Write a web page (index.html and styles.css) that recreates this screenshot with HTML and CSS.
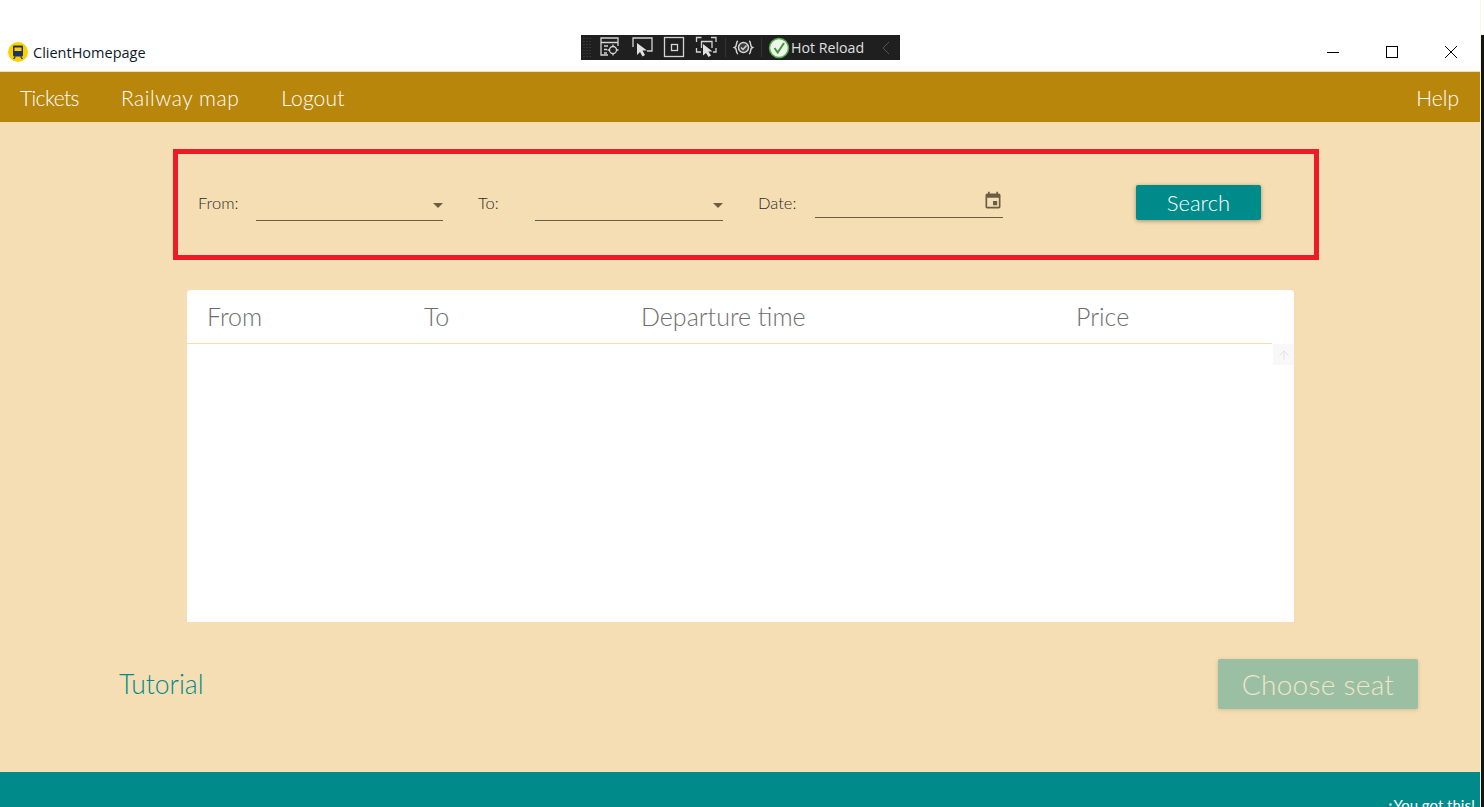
FILE: index.html
```html
<!DOCTYPE html>

<html lang="en">

<head>
    <title>ClientHomepage</title>
    <meta charset="utf-8">
    <meta name="viewport" content="width=device-width, initial-scale=1.0">
    <link rel="stylesheet" href="styles.css">
</head>

<body>
    <div class="screen">
        <div class="window">
            <div class="titlebar">
                <svg class="app_icon" viewBox="0 0 20 20" width="20" height="20">
                    <circle cx="10" cy="10" r="10" fill="#fdd000" />
                    <path d="M6 3.500h8a1 1 0 0 1 1 1V13a1.500 1.500 0 0 1-1.500 1.500h-7A1.500 1.500 0 0 1 5 13V4.500a1 1 0 0 1 1-1z" fill="#1c3560" />
                    <rect x="6.500" y="5.500" width="7" height="3.500" fill="#fdd000" />
                    <path d="M6.500 14.500 5 17h1.500l1.500-2.500zM13.500 14.500 15 17h-1.500L12 14.500z" fill="#1c3560" />
                </svg>
                <span class="app_title">ClientHomepage</span>
                <div class="window_buttons">
                    <svg viewBox="0 0 12 12" width="12" height="12"><path d="M0 6.500h12" stroke="#000" fill="none" /></svg>
                    <svg viewBox="0 0 12 12" width="12" height="12"><rect x="0.500" y="0.500" width="11" height="11" stroke="#000" fill="none" /></svg>
                    <svg viewBox="0 0 12 12" width="12" height="12"><path d="M0 0l12 12M12 0L0 12" stroke="#000" fill="none" /></svg>
                </div>
            </div>

            <nav class="menu">
                <a class="tickets">Tickets</a>
                <a class="railway">Railway map</a>
                <a class="logout">Logout</a>
                <a class="help">Help</a>
            </nav>

            <main>
                <div class="search">
                    <label class="from_label">From:</label>
                    <div class="combo"><span class="arrow"></span></div>
                    <label>To:</label>
                    <div class="combo to_combo"><span class="arrow"></span></div>
                    <label>Date:</label>
                    <div class="date">
                        <svg viewBox="0 0 24 24" width="20" height="20">
                            <path fill="#6b5d45" d="M17 12h-5v5h5v-5zM16 1v2H8V1H6v2H5c-1.110 0-1.990.9-1.990 2L3 19c0 1.100.89 2 2 2h14c1.100 0 2-.9 2-2V5c0-1.100-.9-2-2-2h-1V1h-2zm3 18H5V8h14v11z" />
                        </svg>
                    </div>
                    <button class="search_btn">Search</button>
                </div>

                <div class="card">
                    <div class="card_head">
                        <span>From</span>
                        <span>To</span>
                        <span>Departure time</span>
                        <span>Price</span>
                    </div>
                    <div class="scroll_up">
                        <svg viewBox="0 0 12 12" width="12" height="12"><path d="M6 11V2M1.500 6.500 6 2l4.500 4.500" stroke="#e2e2e2" fill="none" /></svg>
                    </div>
                </div>

                <div class="actions">
                    <a class="tutorial">Tutorial</a>
                    <button class="choose" disabled>Choose seat</button>
                </div>
            </main>

            <footer>
                <span class="cheer">You got this!</span>
            </footer>
        </div>
        <div class="edge"></div>
    </div>

    <!-- debug toolbar sits over the title bar -->
    <div class="hot_reload">
        <svg viewBox="0 0 186 25" width="186" height="25">
            <path d="M3 3v19M6 3v19M9 3v19" stroke="#4a4a4a" stroke-dasharray="1 2" fill="none" />
            <path d="M144.500 3v19M180.500 3v19" stroke="#333" fill="none" />
            <g stroke="#d4d4d4" fill="none" stroke-width="1.300">
                <path d="M27 20H20V3h17v8M20 7.500h17M23 11h4M23 14.500h3M23 18h3" />
                <circle cx="32" cy="15" r="3.500" />
                <path d="M32 9.500v2M32 18.500v2M26.500 15h2M35.500 15h2" />
                <path d="M52 12V3h19v13h-5" />
                <rect x="83.500" y="2.500" width="19" height="19" />
                <rect x="90.500" y="9.500" width="6" height="6" />
                <path d="M115.500 7V2.500h5M130 2.500h5V7M135 13v4h-3M120 17h-4.500v-4" />
                <path d="M120.500 13V6.500h10.500V13" />
            </g>
            <path d="M56 8v12l3-3 2.500 4.500 2.500-1.500-2.500-4.500h4.500z" fill="#e0e0e0" />
            <path d="M122 9v11.500l3-2.500 2.500 4 2.500-1.500-2.500-4h4z" fill="#e0e0e0" />
            <g stroke="#d4d4d4" fill="none" stroke-width="1.500">
                <path d="M157 6c-3 1 0 5-3.500 6.500C157 14 154 18 157 19M168 6c3 1 0 5 3.500 6.500C168 14 171 18 168 19" />
                <circle cx="162.500" cy="12.500" r="5" fill="#3c3c3c" />
                <path d="M160 12.500l2 2 3.500-4" />
            </g>
        </svg>
        <svg class="hr_check" viewBox="0 0 22 22" width="22" height="22">
            <circle cx="11" cy="11" r="9.500" fill="#eef6ee" stroke="#52b043" stroke-width="1.500" />
            <path d="M6.500 11l3.200 4.500L16 6" stroke="#3d9a33" stroke-width="2" fill="none" />
        </svg>
        <span class="hr_text">Hot Reload</span>
        <svg class="hr_back" viewBox="0 0 8 14" width="8" height="14"><path d="M7 1L1 7l6 6" stroke="#555" fill="none" /></svg>
    </div>
</body>

</html>
```

FILE: styles.css
```css
html,
body {
    margin: 0;
    padding: 0;
    background-color: white;
}

body {
    font-family: "Lato", "Open Sans", sans-serif;
    overflow: hidden;
}

.screen {
    display: flex;
    height: 807px;
    overflow: hidden;
}

.window {
    width: 1480px;
    display: flex;
    flex-direction: column;
    background-color: wheat;
    border-right: 1px solid #fbf3e2;
}

.edge {
    width: 3px;
    margin-top: 35px;
    background-color: #141414;
}

.titlebar {
    height: 72px;
    box-sizing: border-box;
    padding: 42px 0 0 8px;
    display: flex;
    align-items: flex-start;
    background-color: white;
    border-bottom: 1px solid #f5deb3;
}

.app_title {
    margin-left: 5px;
    font-family: "Open Sans", sans-serif;
    font-size: 14.500px;
    line-height: 21px;
    color: #0c1a2c;
}

.window_buttons {
    margin-left: auto;
    padding: 4px 23px 0 0;
    display: flex;
    gap: 47px;
}

.menu {
    height: 50px;
    display: flex;
    align-items: center;
    padding: 0 21px 0 20px;
    gap: 42px;
    background-color: #b8860b;
    color: white;
    font-size: 21px;
    font-weight: 300;
}

.tickets {
    letter-spacing: -0.6px;
}

.railway {
    letter-spacing: 0.55px;
}

.logout {
    letter-spacing: 0.15px;
}

.help {
    margin-left: auto;
}

main {
    flex: 1;
    padding-top: 27px;
}

.search {
    width: 1146px;
    height: 111px;
    box-sizing: border-box;
    margin-left: 173px;
    padding: 31px 0 0 20px;
    border: 5px solid #ed1c24;
    display: flex;
    align-items: flex-start;
}

.search label {
    width: 57px;
    line-height: 36px;
    font-size: 16.500px;
    font-weight: 300;
    color: #2e2b25;
}

.search .from_label {
    width: 58px;
}

.combo,
.date {
    width: 187px;
    height: 36px;
    box-sizing: border-box;
    margin-right: 35px;
    border-bottom: 1px solid #6b5d45;
    display: flex;
    justify-content: flex-end;
}

.to_combo {
    width: 188px;
}

.arrow {
    width: 0;
    height: 0;
    margin-top: 18px;
    border-left: 5px solid transparent;
    border-right: 5px solid transparent;
    border-top: 5px solid #6b5d45;
}

.date {
    width: 188px;
    height: 33px;
    margin-right: 0;
}

.date svg {
    margin-top: 6px;
}

.search_btn {
    width: 125px;
    height: 35px;
    padding: 0;
    margin-left: 133px;
    border: 0;
    border-radius: 2px;
    background-color: darkcyan;
    color: white;
    font-family: inherit;
    font-size: 22px;
    font-weight: 300;
    box-shadow: 0 1px 4px rgba(0, 0, 0, 0.35);
}

.card {
    width: 1107px;
    height: 332px;
    margin: 30px 0 0 187px;
    border-radius: 4px 4px 0 0;
    background-color: white;
}

.card_head {
    width: 1085px;
    height: 54px;
    box-sizing: border-box;
    padding: 0 0 2px 20px;
    display: grid;
    grid-template-columns: 217px 217px 435px auto;
    align-items: center;
    border-bottom: 1px solid #f5deb3;
    font-size: 25px;
    font-weight: 300;
    color: #6e6e6e;
}

.scroll_up {
    width: 21px;
    height: 21px;
    margin-left: auto;
    display: flex;
    align-items: center;
    justify-content: center;
    background-color: #f8f8f8;
}

.actions {
    margin: 37px 62px 0 119px;
    display: flex;
    justify-content: space-between;
    align-items: center;
}

.tutorial {
    font-size: 26.500px;
    font-weight: 300;
    color: darkcyan;
}

.choose {
    width: 200px;
    height: 50px;
    border: 0;
    border-radius: 2px;
    background-color: #9bbfa3;
    color: #f1e6c8;
    font-family: inherit;
    font-size: 28px;
    letter-spacing: 0.3px;
    font-weight: 300;
    box-shadow: 0 1px 4px rgba(0, 0, 0, 0.15);
}

footer {
    height: 35px;
    box-sizing: border-box;
    padding: 24px 5px 0 0;
    overflow: hidden;
    text-align: right;
    background-color: darkcyan;
    color: white;
    font-size: 15px;
}

.cheer::before {
    content: "";
    display: inline-block;
    width: 3px;
    height: 3px;
    margin-right: 1px;
    vertical-align: 5px;
    border-radius: 50%;
    background-color: #b5c9c9;
}

.hot_reload {
    position: absolute;
    left: 581px;
    top: 35px;
    width: 319px;
    height: 25px;
    display: flex;
    align-items: center;
    background-color: #1f1f1f;
    color: #e0e0e0;
    font-family: "Open Sans", sans-serif;
    font-size: 14.200px;
}

.hr_check {
    margin-left: 1px;
}

.hr_text {
    margin-left: 1px;
}

.hr_back {
    margin-left: 18px;
}
```
